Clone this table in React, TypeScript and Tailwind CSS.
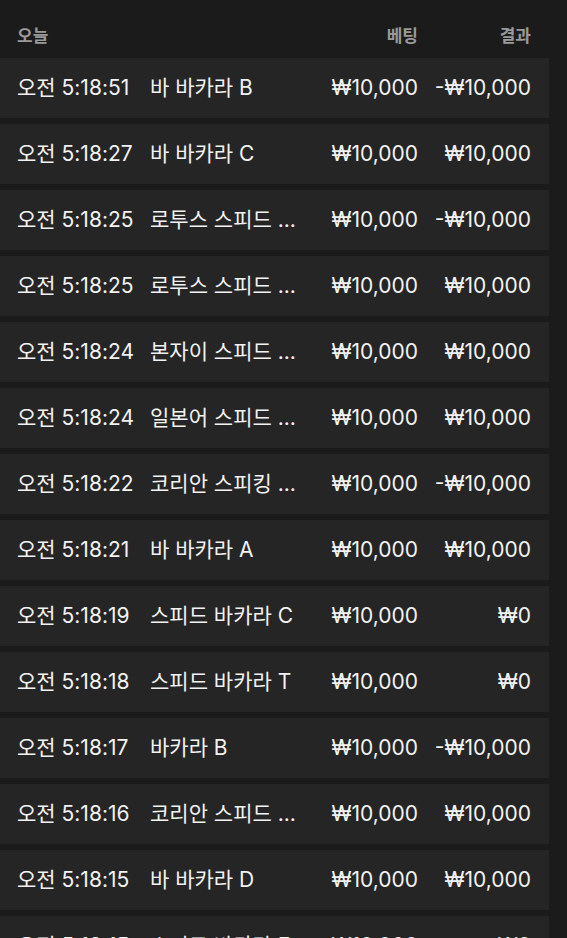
const rows = [
  { time: '오전 5:18:51', game: '바 바카라 B', bet: '₩10,000', result: '-₩10,000' },
  { time: '오전 5:18:27', game: '바 바카라 C', bet: '₩10,000', result: '₩10,000' },
  { time: '오전 5:18:25', game: '로투스 스피드 ...', bet: '₩10,000', result: '-₩10,000' },
  { time: '오전 5:18:25', game: '로투스 스피드 ...', bet: '₩10,000', result: '₩10,000' },
  { time: '오전 5:18:24', game: '본자이 스피드 ...', bet: '₩10,000', result: '₩10,000' },
  { time: '오전 5:18:24', game: '일본어 스피드 ...', bet: '₩10,000', result: '₩10,000' },
  { time: '오전 5:18:22', game: '코리안 스피킹 ...', bet: '₩10,000', result: '-₩10,000' },
  { time: '오전 5:18:21', game: '바 바카라 A', bet: '₩10,000', result: '₩10,000' },
  { time: '오전 5:18:19', game: '스피드 바카라 C', bet: '₩10,000', result: '₩0' },
  { time: '오전 5:18:18', game: '스피드 바카라 T', bet: '₩10,000', result: '₩0' },
  { time: '오전 5:18:17', game: '바카라 B', bet: '₩10,000', result: '-₩10,000' },
  { time: '오전 5:18:16', game: '코리안 스피드 ...', bet: '₩10,000', result: '₩10,000' },
  { time: '오전 5:18:15', game: '바 바카라 D', bet: '₩10,000', result: '₩10,000' },
  { time: '오전 5:18:15', game: '스피드 바카라 E', bet: '₩10,000', result: '₩0' },
];

export default function App() {
  return (
    <div
      className="h-[938px] overflow-hidden bg-[#1b1b1b] text-[#f2f2f2]"
      style={{ fontFamily: 'Inter, "Noto Sans CJK KR", sans-serif' }}
    >
      <div className="w-[549px]">
        {/* header */}
        <div className="flex items-center h-[58px] pt-[16px] pl-[17px] pr-[18px] text-[17px] font-bold text-[#9a9a9a]">
          <div className="flex-1">오늘</div>
          <div className="w-[100px] text-right">베팅</div>
          <div className="w-[113px] text-right">결과</div>
        </div>

        {/* rows */}
        <div className="flex flex-col gap-[6px]">
          {rows.map((r, i) => (
            <div
              key={i}
              className="flex items-center h-[60px] shrink-0 bg-[#252525] pl-[17px] pr-[18px] text-[21px] whitespace-nowrap"
            >
              <div className="w-[133px]">{r.time}</div>
              <div className="flex-1">{r.game}</div>
              <div className="w-[100px] text-right">{r.bet}</div>
              <div className="w-[113px] text-right">{r.result}</div>
            </div>
          ))}
        </div>
      </div>
    </div>
  );
}
